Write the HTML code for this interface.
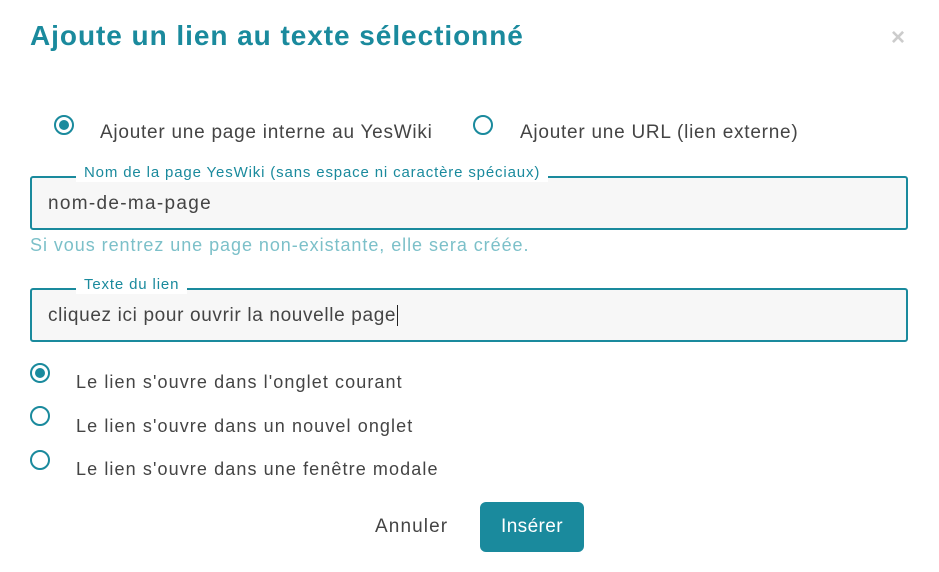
<!DOCTYPE html>
<html><head><meta charset="utf-8"><style>
*{margin:0;padding:0;box-sizing:border-box}
body{width:939px;height:572px;background:#fff;font-family:"Liberation Sans",sans-serif;position:relative;overflow:hidden;color:#444}
.a{position:absolute;white-space:nowrap}
.r{position:absolute;width:20px;height:20px;border:2px solid #1a8a9d;border-radius:50%}
.r.on::after{content:"";position:absolute;left:3px;top:3px;width:10px;height:10px;border-radius:50%;background:#1a8a9d}
.inp{position:absolute;left:30px;width:878px;height:54px;border:2px solid #1a8a9d;border-radius:3px;background:#f7f7f7}
.lg{position:absolute;left:76px;background:#fff;padding:0 8px;color:#1a8a9d;font-size:15px;line-height:18px;letter-spacing:0.85px}
.rl{font-size:18px;letter-spacing:1.1px}
</style></head><body>
<div class="a" style="left:30px;top:20px;font-size:28px;font-weight:bold;color:#1a8a9d;letter-spacing:0.95px">Ajoute un lien au texte sélectionné</div>
<div class="a" style="left:891px;top:24px;font-size:24px;color:#ccc;font-weight:bold">×</div>

<div class="r on" style="left:54px;top:115px"></div>
<div class="a" style="left:100px;top:122px;font-size:19px;letter-spacing:0.75px">Ajouter une page interne au YesWiki</div>
<div class="r" style="left:473px;top:115px"></div>
<div class="a" style="left:520px;top:122px;font-size:19px;letter-spacing:0.75px">Ajouter une URL (lien externe)</div>

<div class="inp" style="top:176px"></div>
<div class="lg" style="top:164px">Nom de la page YesWiki (sans espace ni caractère spéciaux)</div>
<div class="a" style="left:48px;top:193px;font-size:19px;letter-spacing:1.3px">nom-de-ma-page</div>
<div class="a" style="left:30px;top:235px;font-size:18px;color:#7cc0c9;letter-spacing:0.95px">Si vous rentrez une page non-existante, elle sera créée.</div>

<div class="inp" style="top:288px"></div>
<div class="lg" style="top:276px">Texte du lien</div>
<div class="a" style="left:48px;top:305px;font-size:19px;letter-spacing:0.65px">cliquez ici pour ouvrir la nouvelle page<span style="border-left:1px solid #222;margin-left:1px"></span></div>

<div class="r on" style="left:30px;top:363px"></div>
<div class="a rl" style="left:76px;top:372px">Le lien s'ouvre dans l'onglet courant</div>
<div class="r" style="left:30px;top:406px"></div>
<div class="a rl" style="left:76px;top:416px">Le lien s'ouvre dans un nouvel onglet</div>
<div class="r" style="left:30px;top:450px"></div>
<div class="a rl" style="left:76px;top:459px">Le lien s'ouvre dans une fenêtre modale</div>

<div class="a" style="left:375px;top:516px;font-size:19px;letter-spacing:1.1px">Annuler</div>
<div class="a" style="left:480px;top:502px;width:104px;height:50px;background:#1a8a9d;border-radius:6px;color:#fff;font-size:19px;text-align:center;line-height:50px;letter-spacing:0.4px">Insérer</div>
</body></html>
